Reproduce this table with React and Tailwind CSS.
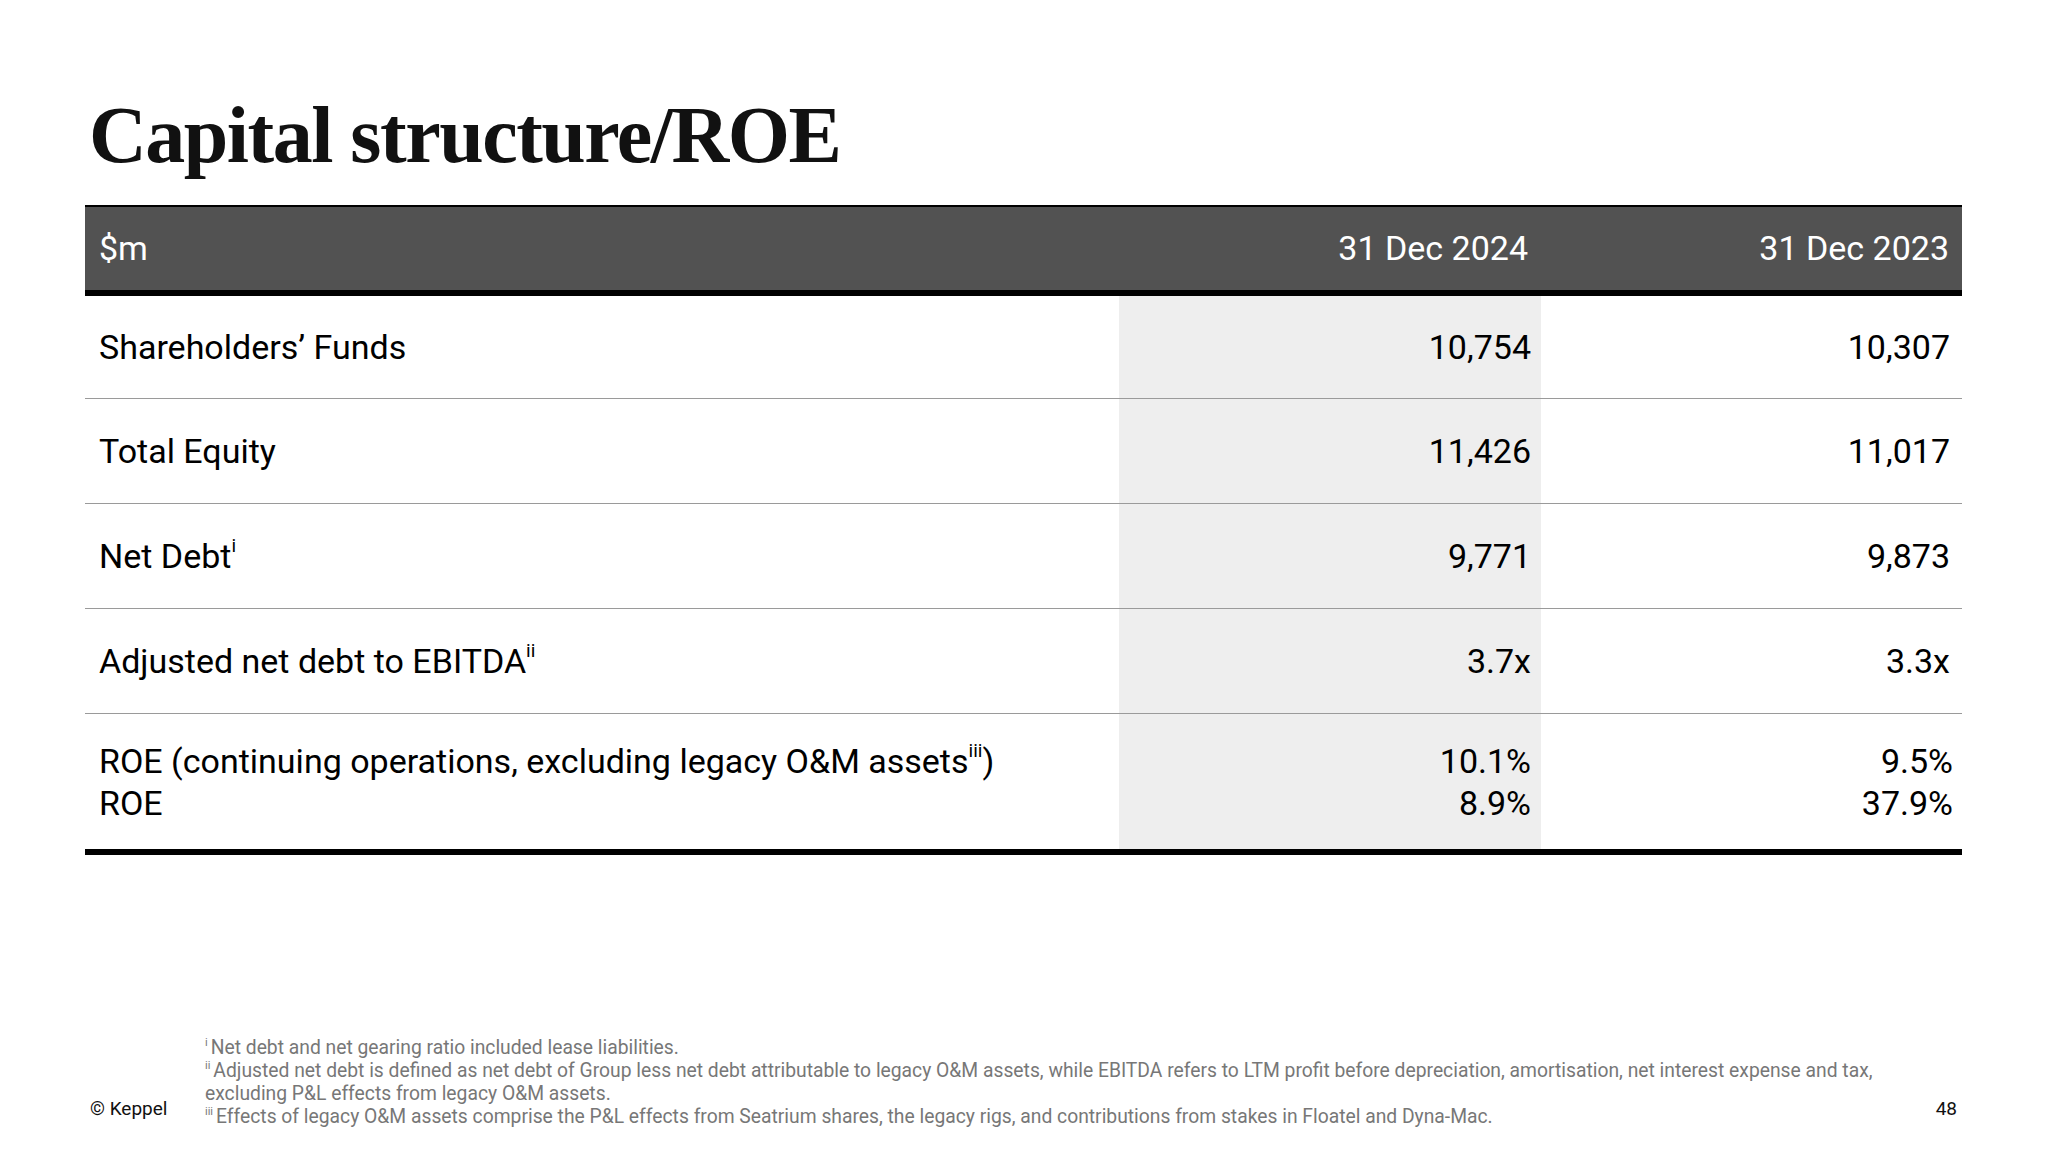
import React from "react";

const rows = [
  { label: "Shareholders’ Funds", a: ["10,754"], b: ["10,307"], h: "h-[103px]" },
  { label: "Total Equity", a: ["11,426"], b: ["11,017"], h: "h-[105px]" },
  { label: "Net Debt", sup: "i", a: ["9,771"], b: ["9,873"], h: "h-[105px]" },
  { label: "Adjusted net debt to EBITDA", sup: "ii", a: ["3.7x"], b: ["3.3x"], h: "h-[105px]" },
];

function Sup({ children }) {
  return <sup className="text-[19px] top-[-0.8em]">{children}</sup>;
}

function FnSup({ children }) {
  return <sup className="text-[11px] top-[-0.7em] mr-[3px]">{children}</sup>;
}

export default function App() {
  return (
    <div className="w-[2048px] h-[1152px] bg-white flex flex-col text-black font-['Roboto',sans-serif]">
      {/* Title */}
      <h1 className="pt-[95px] pl-[89px] text-[80px] leading-none font-bold tracking-[-1.5px] text-[#111] font-['Liberation_Serif',serif]">
        Capital structure/ROE
      </h1>

      {/* Table */}
      <div className="mt-[30px] ml-[85px] w-[1877px]">
        <div className="grid grid-cols-[1034px_422px_421px] h-[91px] bg-[#525252] border-t-2 border-b-[6px] border-black text-white text-[34px] items-center">
          <div className="pl-[14px]">$m</div>
          <div className="text-right pr-[13px]">31 Dec 2024</div>
          <div className="text-right pr-[13px]">31 Dec 2023</div>
        </div>

        {rows.map((r) => (
          <div
            key={r.label}
            className={`grid grid-cols-[1034px_422px_421px] border-b border-[#9a9a9a] text-[34px] ${r.h}`}
          >
            <div className="pl-[14px] flex items-center">
              <span>
                {r.label}
                {r.sup && <Sup>{r.sup}</Sup>}
              </span>
            </div>
            <div className="bg-[#eeeeee] flex items-center justify-end pr-[10px]">{r.a}</div>
            <div className="flex items-center justify-end pr-[12px]">{r.b}</div>
          </div>
        ))}

        <div className="grid grid-cols-[1034px_422px_421px] h-[141px] border-b-[6px] border-black text-[34px] leading-[42px]">
          <div className="pl-[14px] flex flex-col justify-center">
            <span>
              ROE (continuing operations, excluding legacy O&amp;M assets<Sup>iii</Sup>)
            </span>
            <span>ROE</span>
          </div>
          <div className="bg-[#eeeeee] flex flex-col justify-center items-end pr-[10px]">
            <span>10.1%</span>
            <span>8.9%</span>
          </div>
          <div className="flex flex-col justify-center items-end pr-[9px]">
            <span>9.5%</span>
            <span>37.9%</span>
          </div>
        </div>
      </div>

      {/* Footer */}
      <div className="mt-auto mb-[24px] flex items-end pl-[90px] pr-[91px]">
        <div className="w-[115px] text-[19px] leading-[23px] mb-[8px] text-[#111]">© Keppel</div>
        <div className="flex-1 text-[19.3px] leading-[23px] text-[#777] whitespace-nowrap">
          <div><FnSup>i</FnSup>Net debt and net gearing ratio included lease liabilities.</div>
          <div>
            <FnSup>ii</FnSup>Adjusted net debt is defined as net debt of Group less net debt attributable to legacy O&amp;M assets, while EBITDA refers to LTM profit before depreciation, amortisation, net interest expense and tax,
          </div>
          <div>excluding P&amp;L effects from legacy O&amp;M assets.</div>
          <div>
            <FnSup>iii</FnSup>Effects of legacy O&amp;M assets comprise the P&amp;L effects from Seatrium shares, the legacy rigs, and contributions from stakes in Floatel and Dyna-Mac.
          </div>
        </div>
        <div className="text-[19px] leading-[23px] mb-[8px] text-[#111]">48</div>
      </div>
    </div>
  );
}
